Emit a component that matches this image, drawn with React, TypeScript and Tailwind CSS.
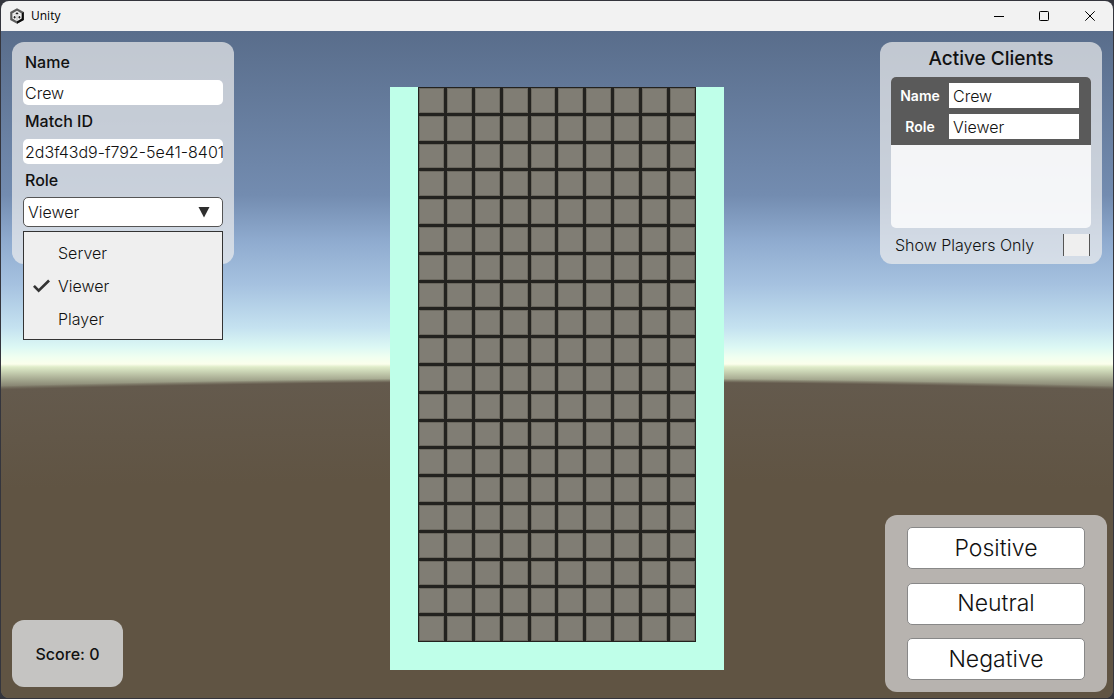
import { useState } from "react";

const roles = ["Server", "Viewer", "Player"];
const cells = Array.from({ length: 200 }, (_, i) => i);

function UnityLogo() {
  return (
    <svg viewBox="0 0 16 16" className="size-4" aria-hidden="true">
      <path d="M8 0.3 14.8 4v8L8 15.7 1.2 12V4z" fill="#5c5c5c" />
      <path d="M14.8 4v8L8 15.7V13l4.4-2.4V5.5z" fill="#0c0c0c" />
      <path d="M8 2.8 12.6 5.4v5.2L8 13.2 3.4 10.6V5.4z" fill="#f2f2f2" />
      <path d="M8 8v5" stroke="#aaa" strokeWidth="0.8" />
      <path d="M8 8l4.4-2.5M8 8L3.6 5.5" stroke="#ccc" strokeWidth="0.6" />
      <ellipse cx="8" cy="5.4" rx="1.4" ry="0.9" fill="#222" />
      <ellipse cx="5.6" cy="9.2" rx="0.9" ry="1.2" fill="#222" />
      <ellipse cx="10.4" cy="9.2" rx="0.9" ry="1.2" fill="#222" />
    </svg>
  );
}

function TitleBar() {
  return (
    <header className="flex h-[30px] shrink-0 items-center bg-[#f2f2f2] text-black">
      <div className="flex flex-1 items-center gap-[6px] pl-2">
        <UnityLogo />
        <span className="font-['Open_Sans',sans-serif] text-xs">Unity</span>
      </div>
      <button aria-label="Minimize" className="grid h-full w-[45px] place-items-center">
        <svg viewBox="0 0 10 10" className="size-[10px]" shapeRendering="crispEdges"><path d="M0 5.5h10" stroke="#000" /></svg>
      </button>
      <button aria-label="Maximize" className="grid h-full w-[46px] place-items-center">
        <svg viewBox="0 0 10 10" className="size-[10px]"><rect x="0.5" y="0.5" width="9" height="9" rx="0.8" fill="none" stroke="#000" /></svg>
      </button>
      <button aria-label="Close" className="grid h-full w-[46px] place-items-center">
        <svg viewBox="0 0 10 10" className="size-[10px]"><path d="M0.3 0.3l9.4 9.4M9.7 0.3L0.3 9.7" stroke="#000" fill="none" /></svg>
      </button>
    </header>
  );
}

function SettingsPanel() {
  const [name, setName] = useState("Crew");
  const [match, setMatch] = useState("2d3f43d9-f792-5e41-8401-2b7c");
  const [role, setRole] = useState("Viewer");
  return (
    <section className="h-[222px] w-[222px] rounded-xl bg-[#eeeeee]/70 px-[11px] pt-2">
      <label htmlFor="name" className="block px-0.5 pb-[6px] text-base leading-6 font-medium">Name</label>
      <input id="name" value={name} onChange={(e) => setName(e.target.value)} className="block h-[25px] w-full rounded-[5px] bg-white px-0.5 text-base font-light" />
      <label htmlFor="match" className="block px-0.5 pt-1 pb-[6px] text-base leading-6 font-medium">Match ID</label>
      <input id="match" value={match} onChange={(e) => setMatch(e.target.value)} className="block h-[25px] w-full rounded-[5px] bg-white pl-0.5 text-base font-light" />
      <label htmlFor="role" className="block px-0.5 pt-1 pb-[5px] text-base leading-6 font-medium">Role</label>
      <div className="relative">
        <select id="role" value={role} onChange={(e) => setRole(e.target.value)} className="block h-[30px] w-full appearance-none rounded-[5px] border border-[#555] bg-white px-1 text-base font-light">
          {roles.map((r) => <option key={r}>{r}</option>)}
        </select>
        <svg viewBox="0 0 12 11" className="pointer-events-none absolute top-[10px] right-[13px] h-[11px] w-3"><path d="M0.5 0h11L6 10.5z" fill="#2e2e2e" /></svg>
        <ul className="absolute top-full left-0 z-10 mt-1 w-full border border-[#333] bg-[#efefef] py-1">
          {roles.map((r) => (
            <li key={r}>
              <button onClick={() => setRole(r)} className="flex h-[33px] w-full items-center gap-2 pl-[9px] text-base font-light">
                <svg viewBox="0 0 18 14" className="h-[14px] w-[17px]" fill="none">
                  {r === role && <path d="M1 6.8 6 12 17 1.2" stroke="#333" strokeWidth="2.8" />}
                </svg>
                {r}
              </button>
            </li>
          ))}
        </ul>
      </div>
    </section>
  );
}

function ClientsPanel() {
  return (
    <section className="mr-[5px] flex h-[222px] w-[222px] flex-col rounded-xl bg-[#eeeeee]/70 px-[11px]">
      <h2 className="pt-[3px] pb-[5px] text-center text-[19px] leading-[27px] font-medium">Active Clients</h2>
      <div className="flex-1 overflow-hidden rounded-[5px] bg-white/80">
        <div className="flex flex-col gap-[6px] bg-[#5a5a5a] py-[6px] pr-3">
          {[["Name", "Crew"], ["Role", "Viewer"]].map(([k, v]) => (
            <label key={k} className="flex items-center text-sm font-semibold text-white">
              <span className="w-[58px] text-center">{k}</span>
              <input readOnly value={v} className="h-[25px] min-w-0 flex-1 bg-white px-1 text-base font-light text-[#111]" />
            </label>
          ))}
        </div>
      </div>
      <label className="flex h-9 items-center justify-between pr-px pb-0.5 pl-1 text-base font-light">
        Show Players Only
        <input type="checkbox" className="h-[22px] w-[27px] appearance-none border-x border-[#555] bg-[#efefef] checked:bg-[#777]" />
      </label>
    </section>
  );
}

function Board() {
  return (
    <div className="grid h-[583px] w-[334px] grid-cols-10 grid-rows-20 gap-[3px] border-x-28 border-b-28 border-[#bfffe9] bg-[#23221f] p-px">
      {cells.map((c) => (
        <div key={c} className="border border-[#6b685f] bg-[#807d74]" />
      ))}
    </div>
  );
}

export default function App() {
  return (
    <div className="flex min-h-screen bg-[#34353d] p-px font-[Inter,sans-serif] text-[#111]">
      <div className="flex flex-1 flex-col overflow-hidden rounded-lg">
        <TitleBar />
        <main className="flex flex-1 justify-between bg-[radial-gradient(circle_at_50%_20000px,#605443_19550px,#645a4d_19649px,#645a4d00_19653px),linear-gradient(#596d8b_0px,#738cb0_164px,#8fabcf_210px,#a6c2e0_254px,#c5e2f0_297px,#dcf8f4_316px,#f0fff0_326px,#fbffec_333px,#dfecc9_336px,#8c8b77_354px,#706a5a_360px)] pt-[11px] pr-[6px] pb-[6px] pl-[11px]">
          <div className="flex w-[222px] flex-col justify-between pb-[5px]">
            <SettingsPanel />
            <div className="grid h-[67px] w-[111px] place-items-center rounded-xl bg-[#c5c4c2] text-base font-medium">Score: 0</div>
          </div>
          <div className="pt-[45px]"><Board /></div>
          <div className="flex w-[227px] flex-col items-end justify-between">
            <ClientsPanel />
            <div className="flex h-[177px] w-[222px] flex-col justify-between rounded-xl bg-[#b7b3af] px-[22px] py-3">
              {["Positive", "Neutral", "Negative"].map((t) => (
                <button key={t} className="h-[42px] rounded-[5px] border border-[#888] bg-white text-[23px] font-light">{t}</button>
              ))}
            </div>
          </div>
        </main>
      </div>
    </div>
  );
}
